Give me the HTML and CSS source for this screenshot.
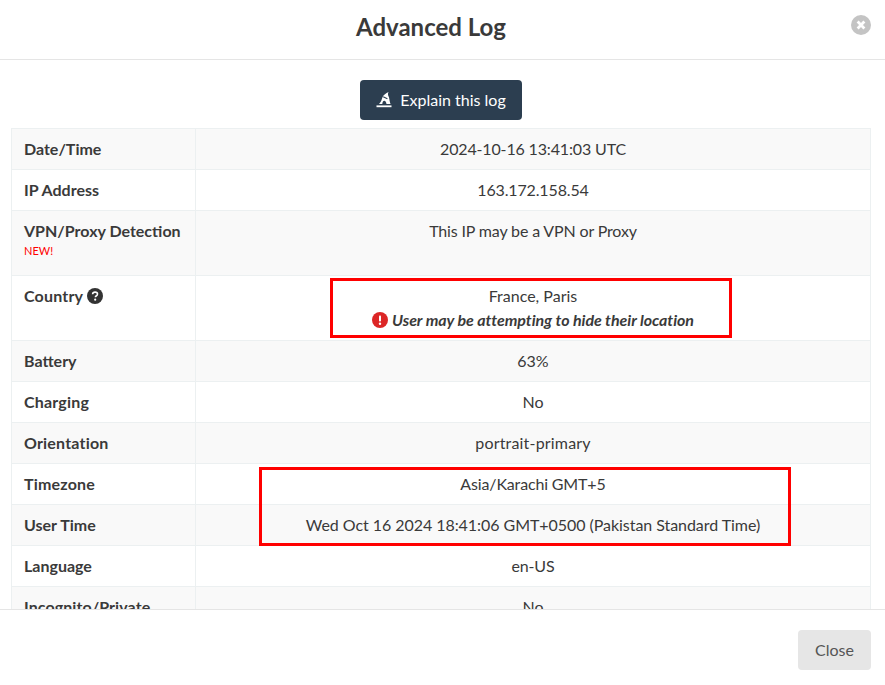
FILE: index.html
```html
<!DOCTYPE html>
<html lang="en">
<head>
<meta charset="utf-8">
<title>Advanced Log</title>
<link rel="stylesheet" href="styles.css">
</head>
<body>
<div class="modal">
  <header class="modal-header">
    <h1 class="modal-title">Advanced Log</h1>
    <button class="dismiss" aria-label="Close">
      <svg viewBox="0 0 20 20" width="20" height="20"><circle cx="10" cy="10" r="10" fill="#c4c4c4"/><path d="M6.6 6.6l6.8 6.8M13.4 6.6l-6.8 6.8" stroke="#fff" stroke-width="2.8" fill="none"/></svg>
    </button>
  </header>
  <main class="modal-body">
    <div class="action">
      <button class="explain">
        <svg viewBox="0 0 16 16" width="16" height="16"><path d="M3 12C5 10 5.500 8 6.500 5.200 7.500 3 10 1 12.500 0 11.500 2 12 3.500 13 5.200 13.400 7.500 13.800 10 14.500 12H10.500C10.200 10.200 9.500 8.800 8.300 8.800 7 8.800 6.500 10.200 6.300 12Z" fill="#fff"/><path d="M7.200 4.800l4.200 2" stroke="#2c3e50" stroke-width="1.100" fill="none"/><rect x="0.500" y="13.400" width="15" height="1.800" fill="#fff"/></svg>
        <span>Explain this log</span>
      </button>
    </div>
    <table class="log">
      <tr><th>Date/Time</th><td class="tight">2024-10-16 13:41:03 UTC</td></tr>
      <tr><th>IP Address</th><td class="tight">163.172.158.54</td></tr>
      <tr class="tall"><th>VPN/Proxy Detection<span class="new">NEW!</span></th><td class="tight">This IP may be a VPN or Proxy</td></tr>
      <tr class="tall"><th><span class="loose">Country</span> <svg class="help" viewBox="0 0 16 16" width="16" height="16"><circle cx="8" cy="8" r="8" fill="#333"/><path d="M5.600 6.200c.1-1.400 1.100-2.100 2.500-2.100s2.400.8 2.400 2c0 1-.6 1.500-1.300 1.900-.6.400-.8.600-.8 1.200" stroke="#fff" stroke-width="1.600" fill="none"/><circle cx="8.200" cy="11.700" r="1.100" fill="#fff"/></svg></th>
        <td>France, Paris<div class="warning"><svg viewBox="0 0 16 16" width="16" height="16"><circle cx="8" cy="8" r="8" fill="#dc2626"/><rect x="7" y="3.500" width="2" height="6" rx=".8" fill="#fff"/><circle cx="8" cy="11.800" r="1.200" fill="#fff"/></svg><em>User may be attempting to hide their location</em></div></td></tr>
      <tr><th>Battery</th><td>63%</td></tr>
      <tr><th class="loose">Charging</th><td>No</td></tr>
      <tr><th class="loose">Orientation</th><td class="loose">portrait-primary</td></tr>
      <tr><th class="loose">Timezone</th><td class="tight">Asia/Karachi GMT+5</td></tr>
      <tr><th>User Time</th><td class="snug">Wed Oct 16 2024 18:41:06 GMT+0500 (Pakistan Standard Time)</td></tr>
      <tr><th>Language</th><td class="tight">en-US</td></tr>
      <tr><th class="slight">Incognito/Private</th><td>No</td></tr>
    </table>
    <div class="mark mark-country"></div>
    <div class="mark mark-time"></div>
  </main>
  <footer class="modal-footer">
    <button class="close">Close</button>
  </footer>
</div>
</body>
</html>
```
FILE: styles.css
```css
* { box-sizing: border-box; }
html, body { margin: 0; height: 100%; }
body { font-family: Lato, sans-serif; color: #3a3a3a; background: #fff; overflow: hidden; }
.modal { height: 685px; display: flex; flex-direction: column; }
.modal-header { position: relative; height: 60px; flex: none; border-bottom: 1px solid #e5e5e5; display: flex; align-items: center; justify-content: center; }
.modal-title { margin: 0 23px 6px 0; font-size: 24px; line-height: 30px; font-weight: 700; color: #3a3a3a; }
.dismiss { position: absolute; right: 14px; top: 15px; width: 20px; height: 20px; padding: 0; border: 0; background: none; display: block; }
.dismiss svg { display: block; }
.modal-body { position: relative; flex: 1; overflow: hidden; padding: 20px 14px 0 11px; }
.action { display: flex; justify-content: center; margin-bottom: 8px; }
.explain { height: 40px; width: 162px; padding: 0 0 2px; display: flex; align-items: center; justify-content: center; gap: 8px; border: 0; border-radius: 4px; background: #2c3e50; color: #fff; font: 400 16px Lato, sans-serif; }
.explain svg { flex: none; margin-top: 2px; }
.log { width: 860px; border-collapse: collapse; table-layout: fixed; font-size: 16px; line-height: 20px; }
.log th, .log td { border: 1px solid #ecf0f1; padding: 10px 12px; vertical-align: top; }
.log th { width: 184px; text-align: left; font-weight: 700; }
.log td { text-align: center; font-weight: 400; }
.log tr:nth-child(odd) { background: #f9f9f9; }
.log .tight { letter-spacing: -.15px; }
.log .snug { letter-spacing: -.05px; }
.log .slight { letter-spacing: .08px; }
.log .loose { letter-spacing: .18px; }
.new { display: block; font-size: 11px; line-height: 14px; margin-top: 3px; font-weight: 400; color: #f00; }
.tall th, .tall td { height: 65px; }
.help { vertical-align: -2px; }
.warning { display: flex; align-items: center; justify-content: center; gap: 4px; margin-top: 4px; }
.warning em { font-weight: 700; font-style: italic; letter-spacing: -.05px; }
.mark { position: absolute; border: 3px solid #f00; }
.mark-country { left: 330px; top: 218px; width: 402px; height: 60px; }
.mark-time { left: 259px; top: 407px; width: 532px; height: 79px; }
.modal-footer { height: 76px; flex: none; border-top: 1px solid #e5e5e5; display: flex; justify-content: flex-end; align-items: flex-start; padding: 20px 14px 0 0; background: #fff; }
.close { width: 73px; height: 40px; padding: 0 0 2px; border: 0; border-radius: 4px; background: #e6e6e6; color: #555; font: 400 16px Lato, sans-serif; }
```
